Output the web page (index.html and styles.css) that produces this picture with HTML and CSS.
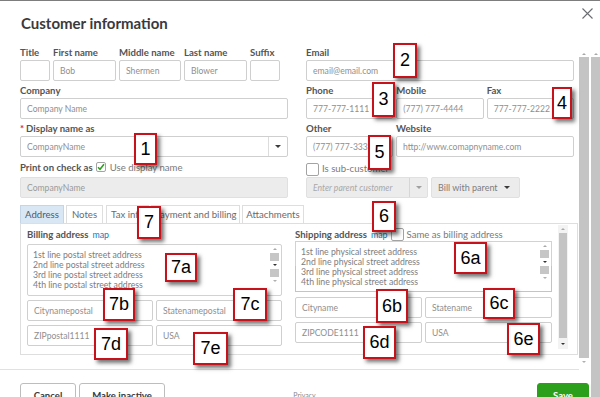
FILE: index.html
```html
<!DOCTYPE html>
<html>
<head>
<meta charset="utf-8">
<title>Customer information</title>
<link rel="stylesheet" href="styles.css">
</head>
<body>
<div class="page">
  <div class="topline"></div>
  <div class="header">
    <h1 class="title">Customer information</h1>
    <svg class="close" width="11" height="11" viewBox="0 0 11 11"><path d="M0.5 0.5L10.5 10.5M10.5 0.5L0.5 10.5" stroke="#6b6c72" stroke-width="1.1" fill="none"/></svg>
  </div>
  <div class="content">
    <div class="left">
      <div class="upper">
        <div class="main">
          <div class="form">
            <div class="col">
              <div class="names">
                <div class="field"><div class="label">Title</div><div class="input"></div></div>
                <div class="field"><div class="label">First name</div><div class="input">Bob</div></div>
                <div class="field"><div class="label">Middle name</div><div class="input">Shermen</div></div>
                <div class="field"><div class="label">Last name</div><div class="input">Blower</div></div>
                <div class="field"><div class="label">Suffix</div><div class="input"></div></div>
              </div>
              <div class="field"><div class="label">Company</div><div class="input">Company Name</div></div>
              <div class="field"><div class="label"><span class="req">*</span>Display name as</div>
                <div class="input combo"><span class="combo-text">CompanyName</span><span class="combo-btn"><span class="caret"></span></span></div>
              </div>
              <div class="check-row">
                <span class="label-inline">Print on check as</span>
                <span class="checkbox small"><svg width="8" height="8" viewBox="0 0 8 8"><path d="M1 4.3L3 6.3L7 1.3" stroke="#2ca01c" stroke-width="1.6" fill="none"/></svg></span>
                <span class="muted">Use display name</span>
              </div>
              <div class="input disabled">CompanyName</div>
            </div>
            <div class="col">
              <div class="field"><div class="label">Email</div><div class="input">email@email.com</div></div>
              <div class="three">
                <div class="field"><div class="label">Phone</div><div class="input">777-777-1111</div></div>
                <div class="field"><div class="label">Mobile</div><div class="input">(777) 777-4444</div></div>
                <div class="field"><div class="label">Fax</div><div class="input">777-777-2222</div></div>
              </div>
              <div class="two">
                <div class="field"><div class="label">Other</div><div class="input">(777) 777-3333</div></div>
                <div class="field"><div class="label">Website</div><div class="input">http://www.comapnyname.com</div></div>
              </div>
              <div class="sub-row">
                <span class="checkbox big"></span>
                <span class="muted">Is sub-customer</span>
              </div>
              <div class="parent-row">
                <div class="input disabled combo parent"><span class="combo-text italic">Enter parent customer</span><span class="combo-btn light"><span class="caret grey"></span></span></div>
                <div class="input disabled billwith"><span class="combo-text">Bill with parent</span><span class="caret"></span></div>
              </div>
            </div>
          </div>
          <div class="tabs">
            <div class="tab active t-address">Address</div>
            <div class="tab t-notes">Notes</div>
            <div class="tab t-tax">Tax info</div>
            <div class="tab t-pay">Payment and billing</div>
            <div class="tab t-att">Attachments</div>
          </div>
          <div class="panel">
            <div class="addr billing">
              <div class="addr-head"><span class="label-inline">Billing address</span><span class="map">map</span></div>
              <div class="textarea tall">
                <div class="lines">
                  <div>1st line postal street address</div>
                  <div>2nd line postal street address</div>
                  <div>3rd line postal street address</div>
                  <div>4th line postal street address</div>
                </div>
                <div class="ta-scroll"><span class="up"></span><span class="blk"></span><span class="dn dark"></span><span class="blk"></span><span class="dn"></span></div>
              </div>
              <div class="pair first"><div class="input">Citynamepostal</div><div class="input">Statenamepostal</div></div>
              <div class="pair"><div class="input">ZIPpostal1111</div><div class="input">USA</div></div>
            </div>
            <div class="addr shipping">
              <div class="addr-head"><span class="label-inline">Shipping address</span><span class="map">map</span><span class="checkbox big same"></span><span class="muted">Same as billing address</span></div>
              <div class="textarea green">
                <div class="lines">
                  <div>1st line physical street address</div>
                  <div>2nd line physical street address</div>
                  <div>3rd line physical street address</div>
                  <div>4th line physical street address</div>
                </div>
                <div class="ta-scroll"><span class="up"></span><span class="blk"></span><span class="dn dark"></span><span class="blk"></span><span class="dn"></span></div>
              </div>
              <div class="pair first"><div class="input">Cityname</div><div class="input">Statename</div></div>
              <div class="pair"><div class="input">ZIPCODE1111</div><div class="input">USA</div></div>
            </div>
            <div class="panel-scroll"><span class="up"></span><span class="fill"></span><span class="dn dark"></span></div>
          </div>
        </div>
        <div class="track track1"><span class="up"></span><span class="fill"></span><span class="dn"></span></div>
      </div>
      <div class="sep"></div>
      <div class="footer">
        <div class="btns"><div class="btn">Cancel</div><div class="btn">Make inactive</div></div>
        <div class="privacy">Privacy</div>
        <div class="save-wrap"><div class="btn save">Save</div></div>
      </div>
    </div>
    <div class="track track2"><span class="up"></span><span class="fill"></span></div>
  </div>

  <div class="callout c1">1</div>
  <div class="callout c2">2</div>
  <div class="callout c3">3</div>
  <div class="callout c4">4</div>
  <div class="callout c5">5</div>
  <div class="callout c6">6</div>
  <div class="callout c7">7</div>
  <div class="callout c7a">7a</div>
  <div class="callout c7b">7b</div>
  <div class="callout c7c">7c</div>
  <div class="callout c7d">7d</div>
  <div class="callout c7e">7e</div>
  <div class="callout c6a">6a</div>
  <div class="callout c6b">6b</div>
  <div class="callout c6c">6c</div>
  <div class="callout c6d">6d</div>
  <div class="callout c6e">6e</div>
</div>
</body>
</html>
```

FILE: styles.css
```css
* { box-sizing: border-box; margin: 0; padding: 0; }
body { margin: 0; background: #fff; font-family: Lato, "Open Sans", sans-serif; }

.page { position: relative; width: 600px; height: 397px; overflow: hidden; display: flex; flex-direction: column; background: #fff; }
.topline { height: 1px; background: #7d7d7d; flex: none; }
.header { height: 42px; flex: none; display: flex; justify-content: space-between; align-items: flex-start; padding: 12px 7px 0 21px; }
.title { font-size: 15px; line-height: 20px; font-weight: 700; color: #393a3d; }
.close { margin-top: -5px; }

.content { flex: 1; display: flex; min-height: 0; }
.left { width: 590px; flex: none; display: flex; flex-direction: column; }
.upper { display: flex; height: 326px; flex: none; }
.main { width: 579px; flex: none; padding: 4px 0 0 20px; }

/* scroll tracks */
.track { width: 10px; margin-top: 7px; display: flex; flex-direction: column; }
.track1 { margin-bottom: 3px; }
.track2 { width: 9px; margin-left: 1px; }
.track .up, .panel-scroll .up, .ta-scroll .up { height: 7px; flex: none; display: flex; justify-content: center; align-items: center; }
.up::before { content: ""; border-left: 2px solid transparent; border-right: 2px solid transparent; border-bottom: 2px solid #a9a9a9; }
.dn { height: 8px; flex: none; display: flex; justify-content: center; align-items: center; }
.dn::before { content: ""; border-left: 2.5px solid transparent; border-right: 2.5px solid transparent; border-top: 2.5px solid #b0b0b0; }
.dn.dark::before { border-top-color: #333; }
.fill { flex: 1; background: #c4c4c4; }

/* form */
.form { display: grid; grid-template-columns: 268px 268px; column-gap: 18px; }
.col { display: flex; flex-direction: column; gap: 4px; }
.names { display: grid; grid-template-columns: 30px 63px 62px 63px 30px; column-gap: 3px; }
.three { display: grid; grid-template-columns: 1fr 1fr 1fr; column-gap: 3px; }
.two { display: grid; grid-template-columns: 87px 1fr; column-gap: 3px; }
.label { font-size: 9.6px; line-height: 11px; font-weight: 700; color: #555; margin-bottom: 2px; white-space: nowrap; }
.req { color: #d52b1e; margin-right: 2px; }
.label-inline { font-size: 9.6px; font-weight: 700; color: #555; white-space: nowrap; }
.muted { font-size: 9.6px; color: #7a7a7a; white-space: nowrap; }

.input { height: 21px; border: 1px solid #cfcfcf; border-radius: 2px; font-size: 8.6px; color: #8f8f8f; padding: 0 6px; display: flex; align-items: center; white-space: nowrap; overflow: hidden; background: #fff; }
.input.disabled { background: #ececec; border-color: #e0e0e0; color: #9a9a9a; }
.combo { padding: 0; }
.combo-text { flex: 1; padding-left: 6px; overflow: hidden; }
.combo-btn { width: 19px; height: 100%; border-left: 1px solid #dcdcdc; display: flex; justify-content: center; align-items: center; flex: none; }
.combo-btn.light { width: 18px; border-left-color: #d6d6d6; }
.caret { width: 0; height: 0; border-left: 3px solid transparent; border-right: 3px solid transparent; border-top: 3px solid #3b3b3b; flex: none; }
.caret.grey { border-top-color: #a0a0a0; }
.italic { font-style: italic; color: #a8a8a8; }

.check-row { height: 12px; display: flex; align-items: center; }
.checkbox { display: inline-flex; justify-content: center; align-items: center; border: 1px solid #a3a3a3; border-radius: 2px; background: #fff; flex: none; }
.checkbox.small { width: 10px; height: 10px; margin: 0 4px 0 3px; }
.checkbox.big { width: 13px; height: 13px; }
.sub-row { height: 12px; display: flex; align-items: flex-start; gap: 3px; }
.sub-row .checkbox { margin-top: 2px; }
.sub-row .muted { line-height: 12px; margin-top: 2px; }
.parent-row { display: flex; gap: 3px; }
.parent { width: 122px; }
.billwith { width: 89px; padding: 0 9px 0 0; }
.billwith .combo-text { color: #7d7d7d; font-size: 9px; }

/* tabs */
.tabs { display: flex; gap: 2px; margin-top: 7px; height: 18px; }
.tab { height: 18px; border: 1px solid #dedede; border-bottom: none; font-size: 9.6px; line-height: 17px; color: #6b6b6b; text-align: center; white-space: nowrap; background: #fff; overflow: hidden; }
.tab.active { background: #d9e7f4; border-color: #c3d5e6; color: #4f5b66; }
.t-address { width: 44px; }
.t-notes { width: 37px; }
.t-tax { width: 43px; margin-left: 1px; }
.t-pay { width: 89px; }
.t-att { width: 62px; }

/* panel */
.panel { width: 558px; height: 132px; border: 1px solid #dedede; display: flex; padding-left: 6px; }
.addr { display: flex; flex-direction: column; margin-top: 5px; }
.billing { width: 255px; margin-right: 13px; }
.shipping { width: 257px; }
.addr-head { height: 11px; display: flex; align-items: center; white-space: nowrap; }
.map { font-size: 8.8px; color: #0a7bc4; margin-left: 4px; }
.same { margin-left: 3px; margin-right: 3px; width: 13px; height: 13px; }
.textarea { border: 1px solid #d2d2d2; border-radius: 2px; display: flex; }
.textarea.tall { height: 52px; margin-top: 4px; }
.textarea.green { height: 51px; margin-top: 1px; border-image: linear-gradient(to bottom, #d2d2d2 50%, #a9d8a2 50%) 1; }
.lines { flex: 1; padding: 5px 0 0 5px; font-size: 8.7px; line-height: 10px; color: #7d7d7d; white-space: nowrap; }
.ta-scroll { width: 9px; margin-right: 2px; display: flex; flex-direction: column; padding-top: 1px; }
.ta-scroll .up { height: 6px; }
.ta-scroll .blk { height: 8px; background: #c6c6c6; flex: none; margin: 1px 0; }
.ta-scroll .dn { height: 6px; }
.pair { display: grid; grid-template-columns: 1fr 1fr; column-gap: 3px; margin-top: 4px; }
.billing .pair.first { margin-top: 4px; }
.shipping .pair.first { margin-top: 5px; }
.panel-scroll { width: 10px; margin-left: 6px; margin-top: 1px; height: 124px; display: flex; flex-direction: column; background: #f3f3f3; }
.panel-scroll .up { height: 8px; }
.panel-scroll .fill { margin: 0 1px; }
.panel-scroll .dn { height: 11px; }

/* footer */
.sep { width: 579px; height: 1px; background: #e1e1e1; flex: none; }
.footer { display: grid; grid-template-columns: 1fr auto 1fr; padding: 13px 1px 0 20px; }
.btns { display: flex; gap: 3px; }
.btn { height: 26px; border: 1px solid #bdbdbd; border-radius: 3px; font-size: 9.6px; line-height: 23px; font-weight: 700; color: #393a3d; text-align: center; background: #fff; }
.btns .btn:first-child { width: 56px; }
.btns .btn:last-child { width: 86px; }
.privacy { font-size: 7px; color: #8a8a8a; padding-top: 8px; }
.save-wrap { display: flex; justify-content: flex-end; }
.btn.save { width: 52px; background: #2ca01c; border-color: #2ca01c; color: #fff; }

/* callouts */
.callout { position: absolute; background: #fff; border: 2px solid #c5121b; box-shadow: 3px 3px 4px rgba(0,0,0,0.55); font-family: Arial, "Liberation Sans", sans-serif; font-size: 18px; color: #000; display: flex; align-items: center; justify-content: center; }
.c1 { left: 134px; top: 133px; width: 23px; height: 32px; }
.c2 { left: 393px; top: 43px; width: 24px; height: 35px; }
.c3 { left: 372px; top: 82px; width: 23px; height: 35px; }
.c4 { left: 552px; top: 87px; width: 20px; height: 32px; }
.c5 { left: 368px; top: 135px; width: 23px; height: 35px; }
.c6 { left: 372px; top: 201px; width: 24px; height: 31px; }
.c7 { left: 137px; top: 206px; width: 24px; height: 33px; }
.c7a { left: 165px; top: 253px; width: 32px; height: 29px; }
.c7b { left: 103px; top: 288px; width: 32px; height: 33px; }
.c7c { left: 233px; top: 288px; width: 34px; height: 33px; }
.c7d { left: 94px; top: 328px; width: 34px; height: 32px; }
.c7e { left: 193px; top: 332px; width: 35px; height: 33px; }
.c6a { left: 454px; top: 242px; width: 33px; height: 32px; }
.c6b { left: 376px; top: 289px; width: 32px; height: 34px; }
.c6c { left: 483px; top: 288px; width: 32px; height: 31px; }
.c6d { left: 363px; top: 326px; width: 33px; height: 33px; }
.c6e { left: 507px; top: 323px; width: 33px; height: 32px; }
```
